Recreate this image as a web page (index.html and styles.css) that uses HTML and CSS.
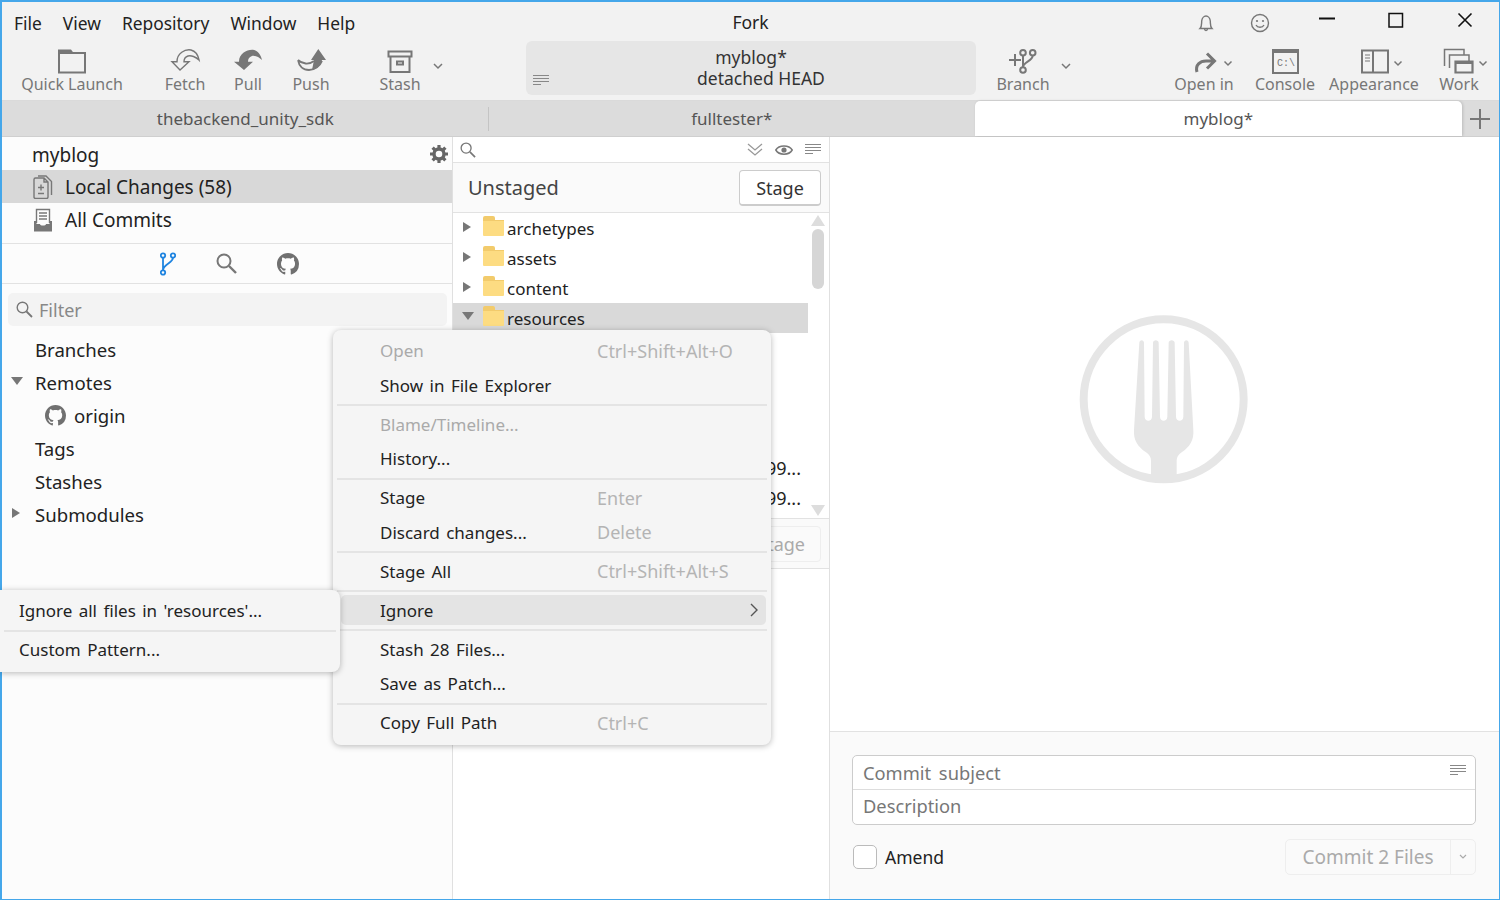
FILE: index.html
```html
<!DOCTYPE html>
<html lang="en">
<head>
    <meta charset="UTF-8">
    <title>Fork</title>
    <link rel="stylesheet" href="styles.css">
</head>
<body>
<div class="window">
    <header class="titlebar">
        <nav class="menubar">
            <span>File</span><span>View</span><span>Repository</span><span>Window</span><span>Help</span>
        </nav>
        <div class="app-title">Fork</div>
        <div class="controls">
            <div class="control-soft">
                <svg width="20" height="20" viewBox="0 0 20 20" class="ico thin"><path d="M4 15.5 C6 13.5 5.5 11 5.7 8 C6 5 8 3 10 3 C12 3 14 5 14.3 8 C14.5 11 14 13.5 16 15.5 Z M8.5 16 C8.7 18 11.3 18 11.5 16" /></svg>
            </div>
            <div class="control-soft">
                <svg width="20" height="20" viewBox="0 0 20 20" class="ico thin"><circle cx="10" cy="10" r="8.5" /><circle cx="7" cy="8" r="1.1" class="solid" /><circle cx="13" cy="8" r="1.1" class="solid" /><path d="M6 12 C7.5 15 12.5 15 14 12" /></svg>
            </div>
            <div class="control">
                <svg width="16" height="16" viewBox="0 0 16 16"><path d="M0 6.5 H16" stroke="#111" stroke-width="2" /></svg>
            </div>
            <div class="control">
                <svg width="16" height="16" viewBox="0 0 16 16"><rect x="1" y="1.5" width="13.5" height="13.5" fill="none" stroke="#111" stroke-width="1.5" /></svg>
            </div>
            <div class="control">
                <svg width="16" height="16" viewBox="0 0 16 16"><path d="M1.5 1.5 L14.5 14.5 M14.5 1.5 L1.5 14.5" stroke="#111" stroke-width="1.6" /></svg>
            </div>
        </div>
    </header>

    <div class="toolbar">
        <div class="tool tool-launch">
            <svg width="120" height="28" viewBox="0 0 120 28" class="ico wide"><path d="M47 6 H73 V25.5 H47 Z" /><path d="M46 6.5 V2.5 H59 L62 6.5 Z" class="solid" /></svg>
            <span>Quick Launch</span>
        </div>
        <div class="tool tool-fetch">
            <svg width="60" height="28" viewBox="0 0 60 28" class="ico thin"><path d="M25 23 L17 14.7 H22 C22 6 30 2 36 3 C40 4 43 8 44 13 C41 10 36 8 33 9 C30 10 29 12 29 14.7 H34 Z" /></svg>
            <span>Fetch</span>
        </div>
        <div class="tool tool-next">
            <svg width="60" height="28" viewBox="0 0 60 28" class="ico thin"><path class="solid" d="M26 23 L16 14.7 H21 C21 6 30 2 36 3 C40 4 43 8 44 13 C41 10 36 8 34 9 C31 10 30 12 30 14.7 H35 Z" /></svg>
            <span>Pull</span>
        </div>
        <div class="tool tool-next">
            <svg width="60" height="28" viewBox="0 0 60 28" class="ico thin"><path class="solid" d="M37.3 2 L45 13 H41 C40 18 36 22 31 23 L33 13 H30 Z" /><path d="M17 13 C18 19 22 23 28 23 C34 23 39 19 41 14 M17 13 C21 17 28 18 33 14" stroke-width="1.8" /></svg>
            <span>Push</span>
        </div>
        <div class="tool tool-stash">
            <svg width="60" height="28" viewBox="0 0 60 28" class="ico"><path d="M18.5 4.5 H41.5 V9.5 H18.5 Z M20.5 9.5 V25 H39.5 V9.5 M27 14.5 H33 V17.5 H27 Z" /></svg>
            <span>Stash</span>
        </div>
        <svg width="16" height="28" viewBox="0 0 16 28" class="ico chev-box"><path d="M4 17 L8 21 L12 17" /></svg>

        <div class="repo-box">
            <svg width="16" height="10" viewBox="0 0 16 10" class="lines"><path d="M0 .5 H16 M0 3.5 H16 M0 6.5 H16 M0 9.5 H8" /></svg>
            <div class="repo-name">myblog*</div>
            <div class="repo-state">detached HEAD</div>
        </div>

        <div class="tool tool-branch">
            <svg width="70" height="28" viewBox="0 0 70 28" class="ico"><path d="M21 13 H33 M27 7 V19 M35 8.5 V20 M44.7 8.5 C44.7 14 35 15 35 20" /><circle cx="35" cy="5.7" r="2.8" /><circle cx="44.7" cy="5.7" r="2.8" /><circle cx="35" cy="23" r="2.8" /></svg>
            <span>Branch</span>
        </div>
        <svg width="16" height="28" viewBox="0 0 16 28" class="ico chev-box"><path d="M4 17 L8 21 L12 17" /></svg>

        <div class="tool tool-open">
            <svg width="70" height="28" viewBox="0 0 70 28" class="ico"><path d="M28 25 C26 18 31 14 37 14 H45 M38 6.5 L45.5 14 L38 21.5" stroke-width="3" /><path d="M55.5 14.5 L59 18 L62.5 14.5" stroke-width="1.5" /></svg>
            <span>Open in</span>
        </div>
        <div class="tool tool-console">
            <svg width="70" height="28" viewBox="0 0 70 28" class="ico"><path d="M23 3 H48 V26 H23 Z" /><path d="M22 2 H49 V6 H22 Z" class="solid" /><text x="27" y="19" class="console-text">C:\</text></svg>
            <span>Console</span>
        </div>
        <div class="tool tool-appearance">
            <svg width="96" height="28" viewBox="0 0 96 28" class="ico"><path d="M36 3.5 H62 V25.5 H36 Z M47 3.5 V25.5" /><path d="M39 8 H44 M39 11 H44 M39 14 H44" stroke-width="1.2" /><path d="M68.5 14.5 L72 18 L75.5 14.5" stroke-width="1.5" /></svg>
            <span>Appearance</span>
        </div>
        <div class="tool tool-work">
            <svg width="60" height="28" viewBox="0 0 60 28" class="ico"><path d="M15.5 19 V2.5 H35 V8 M20.5 21 V8 H40 V14" stroke-width="1.5" /><path d="M26.5 14.5 H43.5 V25.5 H26.5 Z" stroke-width="2.2" /><path d="M26 14 H44 V17 H26 Z" class="solid" /><path d="M50.5 14.5 L54 18 L57.5 14.5" stroke-width="1.5" /></svg>
            <span>Work</span>
        </div>
    </div>

    <div class="tabs">
        <div class="tab tab-split">thebackend_unity_sdk</div>
        <div class="tab">fulltester*</div>
        <div class="tab tab-active">myblog*</div>
        <div class="tab-add">
            <svg width="20" height="20" viewBox="0 0 20 20"><path d="M0 10 H20 M10 0 V20" stroke="#777" stroke-width="2" /></svg>
        </div>
    </div>

    <main class="main">
        <aside class="sidebar">
            <div class="repo-head">
                <span>myblog</span>
                <svg width="18" height="18" viewBox="0 0 18 18" class="gear"><circle cx="9" cy="9" r="5" fill="none" stroke="#666" stroke-width="3.4" /><path d="M9 0 V4 M9 14 V18 M0 9 H4 M14 9 H18 M2.6 2.6 L5.5 5.5 M12.5 12.5 L15.4 15.4 M15.4 2.6 L12.5 5.5 M5.5 12.5 L2.6 15.4" stroke="#666" stroke-width="3.2" /></svg>
            </div>
            <div class="nav-row nav-active">
                <svg width="20" height="24" viewBox="0 0 20 24" class="ico thin nav-icon"><path d="M1 4.5 C1 3.5 1.5 3 2.5 3 H11 L15 7 V22 C15 23 14.5 23.5 13.5 23.5 H2.5 C1.5 23.5 1 23 1 22 Z M5 1 H13 L18.5 6.5 V20 M11 3 V7 H15" /><path d="M8 9.5 V15.5 M5 12.5 H11 M5 18.5 H11" /></svg>
                <span>Local Changes (58)</span>
            </div>
            <div class="nav-row">
                <svg width="20" height="24" viewBox="0 0 20 24" class="ico thin nav-icon"><path d="M3.5 15 V1.5 H16.5 V15 M6 5 H14 M6 8 H14 M6 11 H14" /><path class="solid" d="M1 13 H3.5 V16 H7 C7 18 13 18 13 16 H16.5 V13 H19 V23.5 H1 Z" /></svg>
                <span>All Commits</span>
            </div>
            <div class="side-tabs">
                <svg width="16" height="24" viewBox="0 0 16 24" class="branch-blue"><circle cx="3" cy="3.5" r="2.2" /><circle cx="13" cy="3.5" r="2.2" /><circle cx="3" cy="20.5" r="2.2" /><path d="M3 5.7 V18.3 M13 5.7 C13 11 3 12 3 18.3" /></svg>
                <svg width="21" height="21" viewBox="0 0 21 21" class="ico"><circle cx="8" cy="8" r="6.5" stroke-width="2" /><path d="M13 13 L20 20" stroke-width="2.4" /></svg>
                <svg width="22" height="22" viewBox="0 0 16 16"><path class="github" d="M8 0C3.58 0 0 3.58 0 8c0 3.54 2.29 6.53 5.47 7.59.4.07.55-.17.55-.38 0-.19-.01-.82-.01-1.49-2.01.37-2.53-.49-2.69-.94-.09-.23-.48-.94-.82-1.13-.28-.15-.68-.52-.01-.53.63-.01 1.08.58 1.23.82.72 1.21 1.87.87 2.33.66.07-.52.28-.87.51-1.07-1.78-.2-3.64-.89-3.64-3.95 0-.87.31-1.59.82-2.15-.08-.2-.36-1.02.08-2.12 0 0 .67-.21 2.2.82.64-.18 1.32-.27 2-.27.68 0 1.36.09 2 .27 1.53-1.04 2.2-.82 2.2-.82.44 1.1.16 1.92.08 2.12.51.56.82 1.27.82 2.15 0 3.07-1.87 3.75-3.65 3.95.29.25.54.73.54 1.48 0 1.07-.01 1.93-.01 2.2 0 .21.15.46.55.38A8.013 8.013 0 0016 8c0-4.42-3.58-8-8-8z" /></svg>
            </div>
            <div class="filter">
                <svg width="17" height="17" viewBox="0 0 17 17" class="ico thin"><circle cx="6.5" cy="6.5" r="5.3" /><path d="M10.5 10.5 L16 16" stroke-width="1.8" /></svg>
                <span>Filter</span>
            </div>
            <div class="side-tree">
                <div class="side-row"><span class="side-arrow"></span>Branches</div>
                <div class="side-row"><span class="side-arrow"><i class="tri-down"></i></span>Remotes</div>
                <div class="side-row side-child">
                    <svg width="21" height="21" viewBox="0 0 16 16"><path class="github" d="M8 0C3.58 0 0 3.58 0 8c0 3.54 2.29 6.53 5.47 7.59.4.07.55-.17.55-.38 0-.19-.01-.82-.01-1.49-2.01.37-2.53-.49-2.69-.94-.09-.23-.48-.94-.82-1.13-.28-.15-.68-.52-.01-.53.63-.01 1.08.58 1.23.82.72 1.21 1.87.87 2.33.66.07-.52.28-.87.51-1.07-1.78-.2-3.64-.89-3.64-3.95 0-.87.31-1.59.82-2.15-.08-.2-.36-1.02.08-2.12 0 0 .67-.21 2.2.82.64-.18 1.32-.27 2-.27.68 0 1.36.09 2 .27 1.53-1.04 2.2-.82 2.2-.82.44 1.1.16 1.92.08 2.12.51.56.82 1.27.82 2.15 0 3.07-1.87 3.75-3.65 3.95.29.25.54.73.54 1.48 0 1.07-.01 1.93-.01 2.2 0 .21.15.46.55.38A8.013 8.013 0 0016 8c0-4.42-3.58-8-8-8z" /></svg>
                    origin
                </div>
                <div class="side-row"><span class="side-arrow"></span>Tags</div>
                <div class="side-row"><span class="side-arrow"></span>Stashes</div>
                <div class="side-row"><span class="side-arrow"><i class="tri-right"></i></span>Submodules</div>
            </div>
        </aside>

        <section class="changes">
            <div class="changes-search">
                <svg width="16" height="16" viewBox="0 0 17 17" class="ico thin"><circle cx="6.5" cy="6.5" r="5.3" /><path d="M10.5 10.5 L16 16" stroke-width="1.8" /></svg>
                <div class="changes-tools">
                    <svg width="16" height="13" viewBox="0 0 16 13" class="ico light"><path d="M1 1 L8 7 L15 1 M1 6 L8 12 L15 6" stroke-width="1.3" /></svg>
                    <svg width="18" height="12" viewBox="0 0 18 12" class="ico"><path d="M.8 6 C4 .5 14 .5 17.2 6 C14 11.5 4 11.5 .8 6 Z" stroke-width="1.5" /><circle cx="9" cy="6" r="2.6" class="solid" /></svg>
                    <svg width="16" height="11" viewBox="0 0 16 11" class="lines"><path d="M0 .5 H16 M0 3.5 H16 M0 6.5 H16 M0 9.5 H8" /></svg>
                </div>
            </div>
            <div class="changes-head">
                <span class="changes-title">Unstaged</span>
                <div class="btn">Stage</div>
            </div>
            <div class="file-area">
                <div class="file-rows">
                    <div class="file-row"><i class="tri-right file-tri"></i><span class="folder"></span>archetypes</div>
                    <div class="file-row"><i class="tri-right file-tri"></i><span class="folder"></span>assets</div>
                    <div class="file-row"><i class="tri-right file-tri"></i><span class="folder"></span>content</div>
                    <div class="file-row file-selected"><i class="tri-down file-tri-open"></i><span class="folder"></span>resources</div>
                    <div class="file-row"></div>
                    <div class="file-row"></div>
                    <div class="file-row"></div>
                    <div class="file-row"></div>
                    <div class="file-row file-long">1599...</div>
                    <div class="file-row file-long">1599...</div>
                </div>
                <div class="scrollbar">
                    <i class="scroll-up"></i>
                    <div class="scroll-thumb"></div>
                    <i class="scroll-down"></i>
                </div>
            </div>
            <div class="changes-head staged-head">
                <div class="btn btn-off">Unstage</div>
            </div>
            <div class="staged-body"></div>
        </section>

        <section class="details">
            <div class="details-empty">
                <svg width="210" height="200" viewBox="0 0 630 600">
                    <circle cx="311" cy="298" r="240" fill="none" stroke="#e6e6e6" stroke-width="24" />
                    <path fill="#e6e6e6" d="M238 128 C238 118 252 118 252 128 L254 350 C254 366 276 366 276 350 L279 128 C279 118 296 118 296 128 L300 350 C300 366 322 366 322 350 L326 128 C326 118 344 118 344 128 L348 350 C348 366 370 366 370 350 L372 128 C372 118 386 118 386 128 L400 390 C402 420 390 440 365 457 C355 464 350 472 350 482 L350 530 L273 530 L273 482 C273 472 268 464 258 457 C233 440 220 420 222 390 Z" />
                </svg>
            </div>
            <div class="commit">
                <div class="commit-box">
                    <div class="commit-subject">
                        <span>Commit subject</span>
                        <svg width="16" height="11" viewBox="0 0 16 11" class="lines"><path d="M0 .5 H16 M0 3.5 H16 M0 6.5 H16 M0 9.5 H8" /></svg>
                    </div>
                    <div class="commit-desc">Description</div>
                </div>
                <div class="commit-foot">
                    <span class="checkbox"></span>
                    <span class="amend">Amend</span>
                    <div class="commit-btn">
                        <span class="commit-label">Commit 2 Files</span>
                        <span class="commit-more">
                            <svg width="10" height="6" viewBox="0 0 10 6"><path d="M2 1 L5 4 L8 1" fill="none" stroke="#aaa" stroke-width="1.2" /></svg>
                        </span>
                    </div>
                </div>
            </div>
        </section>
    </main>

    <div class="menu context-menu">
        <div class="menu-item off"><span class="menu-label">Open</span><span class="menu-key">Ctrl+Shift+Alt+O</span></div>
        <div class="menu-item"><span class="menu-label">Show in File Explorer</span></div>
        <div class="menu-sep"></div>
        <div class="menu-item off"><span class="menu-label">Blame/Timeline...</span></div>
        <div class="menu-item"><span class="menu-label">History...</span></div>
        <div class="menu-sep"></div>
        <div class="menu-item"><span class="menu-label">Stage</span><span class="menu-key">Enter</span></div>
        <div class="menu-item"><span class="menu-label">Discard changes...</span><span class="menu-key">Delete</span></div>
        <div class="menu-sep"></div>
        <div class="menu-item"><span class="menu-label">Stage All</span><span class="menu-key">Ctrl+Shift+Alt+S</span></div>
        <div class="menu-sep"></div>
        <div class="menu-item menu-hover">
            <span class="menu-label">Ignore</span>
            <svg width="10" height="16" viewBox="0 0 10 16" class="menu-arrow"><path d="M2 2 L8 8 L2 14" fill="none" stroke="#555" stroke-width="1.4" /></svg>
        </div>
        <div class="menu-sep"></div>
        <div class="menu-item"><span class="menu-label">Stash 28 Files...</span></div>
        <div class="menu-item"><span class="menu-label">Save as Patch...</span></div>
        <div class="menu-sep"></div>
        <div class="menu-item"><span class="menu-label">Copy Full Path</span><span class="menu-key">Ctrl+C</span></div>
    </div>

    <div class="menu sub-menu">
        <div class="menu-item"><span class="menu-label">Ignore all files in 'resources'...</span></div>
        <div class="menu-sep"></div>
        <div class="menu-item"><span class="menu-label">Custom Pattern...</span></div>
    </div>
</div>
</body>
</html>
```

FILE: styles.css
```css
* {
    box-sizing: border-box;
}
html, body {
    margin: 0;
    height: 100%;
    overflow: hidden;
}
body {
    font-family: "Noto Sans", "Open Sans", sans-serif;
    font-size: 18px;
    color: #222;
}
svg {
    display: block;
    flex: none;
}
i {
    display: block;
}

.window {
    position: relative;
    width: 1500px;
    height: 900px;
    display: flex;
    flex-direction: column;
    border: solid #45a7ea;
    border-width: 2px 1px 1px 2px;
    background: #fafafa;
}

/* shared icon strokes */
.ico {
    fill: none;
    stroke: #777;
    stroke-width: 2;
}
.ico.thin {
    stroke-width: 1.4;
}
.ico.light {
    stroke: #999;
}
.ico .solid, .ico.thin .solid {
    fill: #777;
    stroke: none;
}
.lines {
    fill: none;
    stroke: #888;
    stroke-width: 1;
}
.github {
    fill: #707070;
}

/* title bar */
.titlebar {
    height: 40px;
    flex: none;
    display: grid;
    grid-template-columns: 1fr auto 1fr;
    align-items: center;
    background: #f2f2f2;
}
.menubar {
    display: flex;
    gap: 21px;
    padding-left: 12px;
    padding-top: 2px;
    font-size: 17.4px;
}
.app-title {
    font-size: 17.5px;
}
.controls {
    display: flex;
    justify-content: flex-end;
}
.control-soft {
    width: 54px;
    display: flex;
    justify-content: center;
    margin-top: 1px;
}
.control-soft + .control {
    margin-left: 5px;
}
.control {
    width: 69px;
    display: flex;
    justify-content: center;
}

/* toolbar */
.toolbar {
    height: 59px;
    flex: none;
    display: flex;
    background: #f2f2f2;
    border-bottom: 1px solid #dadada;
}
.tool {
    flex: none;
    padding-top: 5px;
    text-align: center;
    font-size: 16px;
    line-height: 18px;
    color: #777;
    white-space: nowrap;
}
.tool-launch {
    width: 120px;
    margin-left: 10px;
}
.tool-fetch {
    width: 60px;
    margin-left: 23px;
}
.tool-next {
    width: 60px;
    margin-left: 3px;
}
.tool-stash {
    width: 60px;
    margin-left: 29px;
}
.chev-box {
    margin-top: 5px;
    stroke-width: 1.5;
}
.repo-box {
    position: relative;
    width: 450px;
    height: 54px;
    flex: none;
    margin-left: 80px;
    margin-top: -1px;
    padding-top: 6px;
    background: #e6e6e6;
    border-radius: 6px;
    text-align: center;
    font-size: 17.5px;
    line-height: 21px;
    color: #333;
}
.repo-box .lines {
    position: absolute;
    left: 7px;
    top: 34px;
}
.repo-state {
    padding-left: 20px;
}
.tool-branch {
    width: 70px;
    margin-left: 12px;
}
.tool-open {
    width: 70px;
    margin-left: 95px;
}
.tool-console {
    width: 70px;
    margin-left: 11px;
}
.tool-appearance {
    width: 96px;
    margin-left: 6px;
}
.tool-work {
    width: 60px;
    margin-left: 7px;
}
.console-text {
    font-family: "Liberation Mono", monospace;
    font-size: 10px;
    fill: #777;
    stroke: none;
}

/* tabs */
.tabs {
    height: 36px;
    flex: none;
    display: flex;
    background: #dcdcdc;
    border-bottom: 1px solid #cfcfcf;
}
.tab {
    width: 486.5px;
    flex: none;
    text-align: center;
    line-height: 36px;
    font-size: 17px;
    color: #555;
}
.tab-split {
    position: relative;
}
.tab-split::after {
    content: "";
    position: absolute;
    right: 0;
    top: 6px;
    height: 24px;
    border-right: 1px solid #c4c4c4;
}
.tab-active {
    background: #fff;
    border-radius: 5px 5px 0 0;
    box-shadow: 1px 0 3px rgba(0, 0, 0, .15);
    height: 35px;
}
.tab-add {
    flex: 1;
    display: flex;
    align-items: center;
    justify-content: center;
}

/* main area */
.main {
    flex: 1;
    display: flex;
    min-height: 0;
}

/* sidebar */
.sidebar {
    width: 451px;
    flex: none;
    border-right: 1px solid #e0e0e0;
    background: #fcfcfc;
}
.repo-head {
    height: 33px;
    display: flex;
    align-items: center;
    justify-content: space-between;
    padding: 3px 4px 0 30px;
    font-size: 19px;
}
.gear {
    margin-top: -3px;
}
.nav-row {
    height: 33px;
    display: flex;
    align-items: center;
    padding-left: 31px;
    font-size: 19px;
}
.nav-active {
    background: #d8d8d8;
}
.nav-icon {
    margin-right: 12px;
}
.side-tabs {
    height: 41px;
    margin-top: 7px;
    display: flex;
    align-items: center;
    justify-content: center;
    gap: 40px;
    padding-left: 4px;
    border-top: 1px solid #e2e2e2;
    border-bottom: 1px solid #e2e2e2;
}
.branch-blue {
    fill: none;
    stroke: #1f84e0;
    stroke-width: 1.8;
}
.filter {
    height: 33px;
    margin: 9px 5px 7px 6px;
    display: flex;
    align-items: center;
    gap: 6px;
    padding-left: 8px;
    background: #f3f3f3;
    border-radius: 5px;
    color: #888;
}
.side-row {
    height: 33px;
    display: flex;
    align-items: center;
    font-size: 18.6px;
}
.side-arrow {
    width: 33px;
    flex: none;
    padding-left: 9px;
}
.side-child {
    padding-left: 43px;
    gap: 8px;
}
.tri-down {
    width: 0;
    height: 0;
    border-left: 6px solid transparent;
    border-right: 6px solid transparent;
    border-top: 8px solid #777;
    margin-top: -4px;
}
.tri-right {
    width: 0;
    height: 0;
    border-top: 5px solid transparent;
    border-bottom: 5px solid transparent;
    border-left: 8px solid #777;
    margin-top: -4px;
    margin-left: 1px;
}

/* changes column */
.changes {
    width: 377px;
    flex: none;
    display: flex;
    flex-direction: column;
    border-right: 1px solid #e0e0e0;
    background: #fff;
}
.changes-search {
    height: 26px;
    flex: none;
    display: flex;
    align-items: center;
    justify-content: space-between;
    padding: 0 8px 0 7px;
    border-bottom: 1px solid #e2e2e2;
}
.changes-tools {
    display: flex;
    align-items: center;
    gap: 12px;
}
.changes-head {
    height: 50px;
    flex: none;
    display: flex;
    align-items: center;
    justify-content: space-between;
    padding: 0 8px 0 15px;
    background: #fafafa;
    border-bottom: 1px solid #e2e2e2;
}
.changes-title {
    font-size: 20px;
    color: #444;
}
.btn {
    width: 82px;
    height: 36px;
    text-align: center;
    line-height: 34px;
    background: #fff;
    border: 1px solid #ccc;
    border-bottom-width: 2px;
    border-radius: 4px;
    font-size: 18px;
    color: #333;
}
.btn-off {
    width: 116px;
    padding-right: 15px;
    text-align: right;
    border: 1px solid #eee;
    background: #fafafa;
    color: #aaa;
}
.staged-head {
    border-top: 1px solid #e2e2e2;
    height: 51px;
    justify-content: flex-end;
}
.file-area {
    height: 305px;
    flex: none;
    display: flex;
}
.file-rows {
    width: 355px;
    flex: none;
}
.file-row {
    height: 30px;
    display: flex;
    align-items: center;
    padding-left: 10px;
    font-size: 17px;
}
.file-tri {
    margin: -2px 12px 0 0;
}
.file-tri-open {
    margin: -4px 9px 0 -1px;
}
.file-selected {
    background: #d9d9d9;
}
.folder {
    position: relative;
    width: 21px;
    height: 16px;
    margin-right: 3px;
    margin-top: -1px;
    flex: none;
    background: #fddc82;
    border-radius: 1px;
}
.folder::before {
    content: "";
    position: absolute;
    left: 0;
    top: -4px;
    width: 12px;
    height: 4px;
    background: #f2cb6c;
    border-radius: 2px 2px 0 0;
}
.folder::after {
    content: "";
    position: absolute;
    left: 0;
    top: 0;
    width: 21px;
    height: 1px;
    background: #f2cb6c;
}
.file-long {
    justify-content: flex-end;
    padding-right: 7px;
    font-size: 18px;
}
.scrollbar {
    width: 14px;
    flex: none;
    margin: 2px 0 0 3px;
    display: flex;
    flex-direction: column;
    align-items: center;
    height: 301px;
}
.scroll-up {
    width: 0;
    height: 0;
    border-left: 7px solid transparent;
    border-right: 7px solid transparent;
    border-bottom: 11px solid #ddd;
    margin-bottom: 3px;
}
.scroll-thumb {
    width: 12px;
    height: 60px;
    background: #d6d6d6;
    border-radius: 6px;
}
.scroll-down {
    width: 0;
    height: 0;
    border-left: 7px solid transparent;
    border-right: 7px solid transparent;
    border-top: 11px solid #ddd;
    margin-top: auto;
}
.staged-body {
    flex: 1;
    background: #fff;
}

/* details column */
.details {
    flex: 1;
    display: flex;
    flex-direction: column;
    min-width: 0;
}
.details-empty {
    height: 595px;
    flex: none;
    display: flex;
    align-items: center;
    justify-content: center;
    padding-bottom: 68px;
    background: #fff;
    border-bottom: 1px solid #e2e2e2;
}
.commit {
    flex: 1;
    padding: 23px 23px 0 22px;
    background: #fafafa;
}
.commit-box {
    height: 70px;
    background: #fff;
    border: 1px solid #ccc;
    border-radius: 5px;
    font-size: 18.3px;
    color: #777;
}
.commit-subject {
    height: 34px;
    display: flex;
    align-items: center;
    justify-content: space-between;
    padding: 0 9px 0 10px;
    border-bottom: 1px solid #ddd;
    word-spacing: 3px;
}
.commit-subject .lines {
    margin-top: -4px;
}
.commit-desc {
    height: 34px;
    line-height: 32px;
    padding-left: 10px;
}
.commit-foot {
    display: flex;
    align-items: center;
    height: 36px;
    margin-top: 14px;
}
.checkbox {
    width: 24px;
    height: 24px;
    margin-left: 1px;
    background: #fff;
    border: 1px solid #bbb;
    border-radius: 5px;
}
.amend {
    margin-left: 8px;
    font-size: 17.5px;
}
.commit-btn {
    width: 191px;
    height: 36px;
    margin-left: auto;
    display: flex;
    align-items: center;
    border: 1px solid #eee;
    border-radius: 5px;
    color: #aaa;
    font-size: 19px;
}
.commit-label {
    width: 165px;
    text-align: center;
    line-height: 34px;
    border-right: 1px solid #eee;
}
.commit-more {
    flex: 1;
    display: flex;
    justify-content: center;
}

/* menus float over the window */
.menu {
    position: absolute;
    padding: 4px 0;
    background: #f5f5f5;
    border-radius: 8px;
    box-shadow: 0 1px 6px rgba(0, 0, 0, .28);
    z-index: 5;
}
.context-menu {
    left: 331px;
    top: 328px;
    width: 438px;
}
.sub-menu {
    left: -2px;
    top: 588px;
    width: 340px;
    border-radius: 0 8px 8px 0;
}
.menu-item {
    height: 34.5px;
    display: flex;
    align-items: center;
    padding-left: 47px;
    padding-bottom: 1px;
    font-size: 17px;
    word-spacing: 2px;
    color: #222;
}
.sub-menu .menu-item {
    padding-left: 19px;
}
.menu-label {
    width: 217px;
    flex: none;
    white-space: nowrap;
}
.off .menu-label {
    color: #aaa;
}
.menu-key {
    color: #b4b4b4;
    font-size: 18px;
    word-spacing: 0;
    white-space: nowrap;
}
.menu-sep {
    height: 4.5px;
    margin: 0 4px;
    display: flex;
    align-items: center;
}
.menu-sep::after {
    content: "";
    flex: 1;
    height: 2px;
    background: #e4e4e4;
}
.menu-hover {
    position: relative;
    height: 30.5px;
    margin: 1px 5px 3px 8px;
    padding: 1px 0 0 39px;
    background: #e4e4e4;
    border-radius: 5px;
}
.menu-arrow {
    position: absolute;
    left: 408px;
    top: 7px;
}
```
